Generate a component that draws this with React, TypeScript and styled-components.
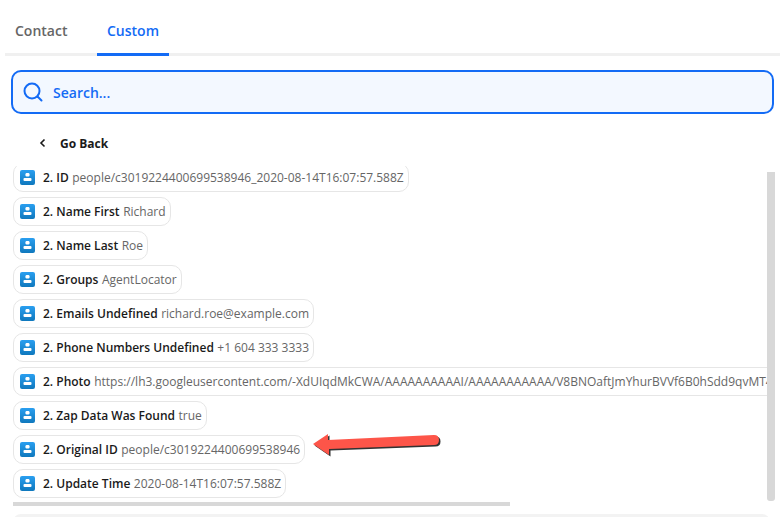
import React from 'react'
import styled, { createGlobalStyle } from 'styled-components'

const Global = createGlobalStyle`
  html, body { margin: 0; padding: 0; background: #fff; overflow: hidden; }
  body { font-family: "Open Sans", "Noto Sans", sans-serif; }
`

const Page = styled.div`
  position: relative;
  width: 782px;
  height: 517px;
  overflow: hidden;
`

const Tabs = styled.div`
  display: flex;
  height: 53px;
  margin-left: 5px;
  margin-right: 2px;
  border-bottom: 3px solid #f0f0f0;
`

const Tab = styled.div<{ $active?: boolean }>`
  width: 72px;
  margin-left: ${p => (p.$active ? '10px' : '0')};
  padding-top: 21px;
  height: 32px;
  text-align: ${p => (p.$active ? 'center' : 'left')};
  padding-left: ${p => (p.$active ? '0' : '10px')};
  font-size: 14px;
  line-height: 20px;
  font-weight: 600;
  color: ${p => (p.$active ? '#136bf5' : '#666666')};
  border-bottom: 3px solid ${p => (p.$active ? '#136bf5' : 'transparent')};
`

const SearchBox = styled.div`
  display: flex;
  align-items: center;
  gap: 10px;
  box-sizing: border-box;
  width: 763px;
  height: 44px;
  margin: 14px 0 0 11px;
  padding-left: 10px;
  background: #f3f8ff;
  border: 2px solid #136bf5;
  border-radius: 10px;
  font-size: 14px;
  font-weight: 600;
  color: #136bf5;
`

const BackRow = styled.div`
  display: flex;
  align-items: center;
  gap: 12px;
  height: 20px;
  margin: 19px 0 0 38px;
  font-size: 12px;
  font-weight: 700;
  color: #1a1a1a;
`

const ListArea = styled.div`
  height: 340px;
  margin: 13px 7px 0 13px;
  overflow: hidden;
`

const List = styled.div`
  display: flex;
  flex-direction: column;
  align-items: flex-start;
  gap: 5px;
  margin-top: -3px;
`

const Chip = styled.div`
  display: flex;
  align-items: center;
  flex: none;
  box-sizing: border-box;
  height: 29px;
  padding: 0 4px 0 6px;
  border: 1px solid #e6e6e6;
  border-radius: 10px;
  font-size: 12px;
  line-height: 16px;
  white-space: nowrap;
  background: #fff;
`

const Label = styled.span`
  margin-left: 8px;
  font-weight: 600;
  color: #1a1a1a;
`

const Value = styled.span`
  margin-left: 3.5px;
  color: #666666;
`

const VerticalBar = styled.div`
  position: absolute;
  left: 767px;
  top: 172px;
  width: 8px;
  height: 329px;
  background: #d8d8d8;
  border-radius: 0 0 3px 3px;
`

const HorizontalBar = styled.div`
  position: absolute;
  left: 13px;
  top: 502px;
  width: 497px;
  height: 4px;
  background: #d8d8d8;
`

const NextPanel = styled.div`
  position: absolute;
  left: 13px;
  top: 514px;
  width: 757px;
  height: 20px;
  background: #f3f3f3;
  border-radius: 8px;
`

const ArrowMark = styled.svg`
  position: absolute;
  left: 310px;
  top: 430px;
`

const rows: [string, string][] = [
  ['2. ID', 'people/c3019224400699538946_2020-08-14T16:07:57.588Z'],
  ['2. Name First', 'Richard'],
  ['2. Name Last', 'Roe'],
  ['2. Groups', 'AgentLocator'],
  ['2. Emails Undefined', 'richard.roe@example.com'],
  ['2. Phone Numbers Undefined', '+1 604 333 3333'],
  ['2. Photo', 'https://lh3.googleusercontent.com/-XdUIqdMkCWA/AAAAAAAAAAI/AAAAAAAAAAA/V8BNOaftJmYhurBVVf6B0hSdd9qvMT4Kg/photo.jpg'],
  ['2. Zap Data Was Found', 'true'],
  ['2. Original ID', 'people/c3019224400699538946'],
  ['2. Update Time', '2020-08-14T16:07:57.588Z'],
]

const ContactIcon = () => (
  <svg width="15" height="15" viewBox="0 0 15 15">
    <defs>
      <linearGradient id="contactBlue" x1="0" y1="0" x2="0" y2="1">
        <stop offset="0" stopColor="#2a9ff0" />
        <stop offset="1" stopColor="#0f78bd" />
      </linearGradient>
    </defs>
    <rect width="15" height="15" rx="2" fill="url(#contactBlue)" />
    <rect x="5.5" y="3" width="4" height="3.5" rx="1.2" fill="#fff" />
    <rect x="3.5" y="8" width="8" height="3" rx="1" fill="#fff" />
  </svg>
)

const App = () => {
  return (
    <Page>
      <Global />
      <Tabs>
        <Tab>Contact</Tab>
        <Tab $active>Custom</Tab>
      </Tabs>
      <SearchBox>
        <svg width="20" height="20" viewBox="0 0 20 20" fill="none" stroke="#136bf5" strokeWidth="2">
          <circle cx="9" cy="9" r="7.5" />
          <path d="M14.5 14.5 18.5 18.5" strokeLinecap="round" />
        </svg>
        Search...
      </SearchBox>
      <BackRow>
        <svg width="10" height="10" viewBox="0 0 10 10" fill="none" stroke="#1a1a1a" strokeWidth="1.6">
          <path d="M6.5 1.5 3 5l3.5 3.5" />
        </svg>
        Go Back
      </BackRow>
      <ListArea>
        <List>
          {rows.map(([label, value]) => (
            <Chip key={label}>
              <ContactIcon />
              <Label>{label}</Label>
              <Value>{value}</Value>
            </Chip>
          ))}
        </List>
      </ListArea>
      <VerticalBar />
      <HorizontalBar />
      <NextPanel />
      <ArrowMark width="135" height="40" viewBox="0 0 135 40">
        <path d="M3 14 L18 4 L18 10 L124 5 Q129 5 129 10 Q129 15 124 15 L19 19 L19 25 Z" fill="#333" transform="translate(1.5 1.5)" />
        <path d="M3 14 L18 4 L18 10 L124 5 Q129 5 129 10 Q129 15 124 15 L19 19 L19 25 Z" fill="#fd5549" />
      </ArrowMark>
    </Page>
  )
}

export default App
